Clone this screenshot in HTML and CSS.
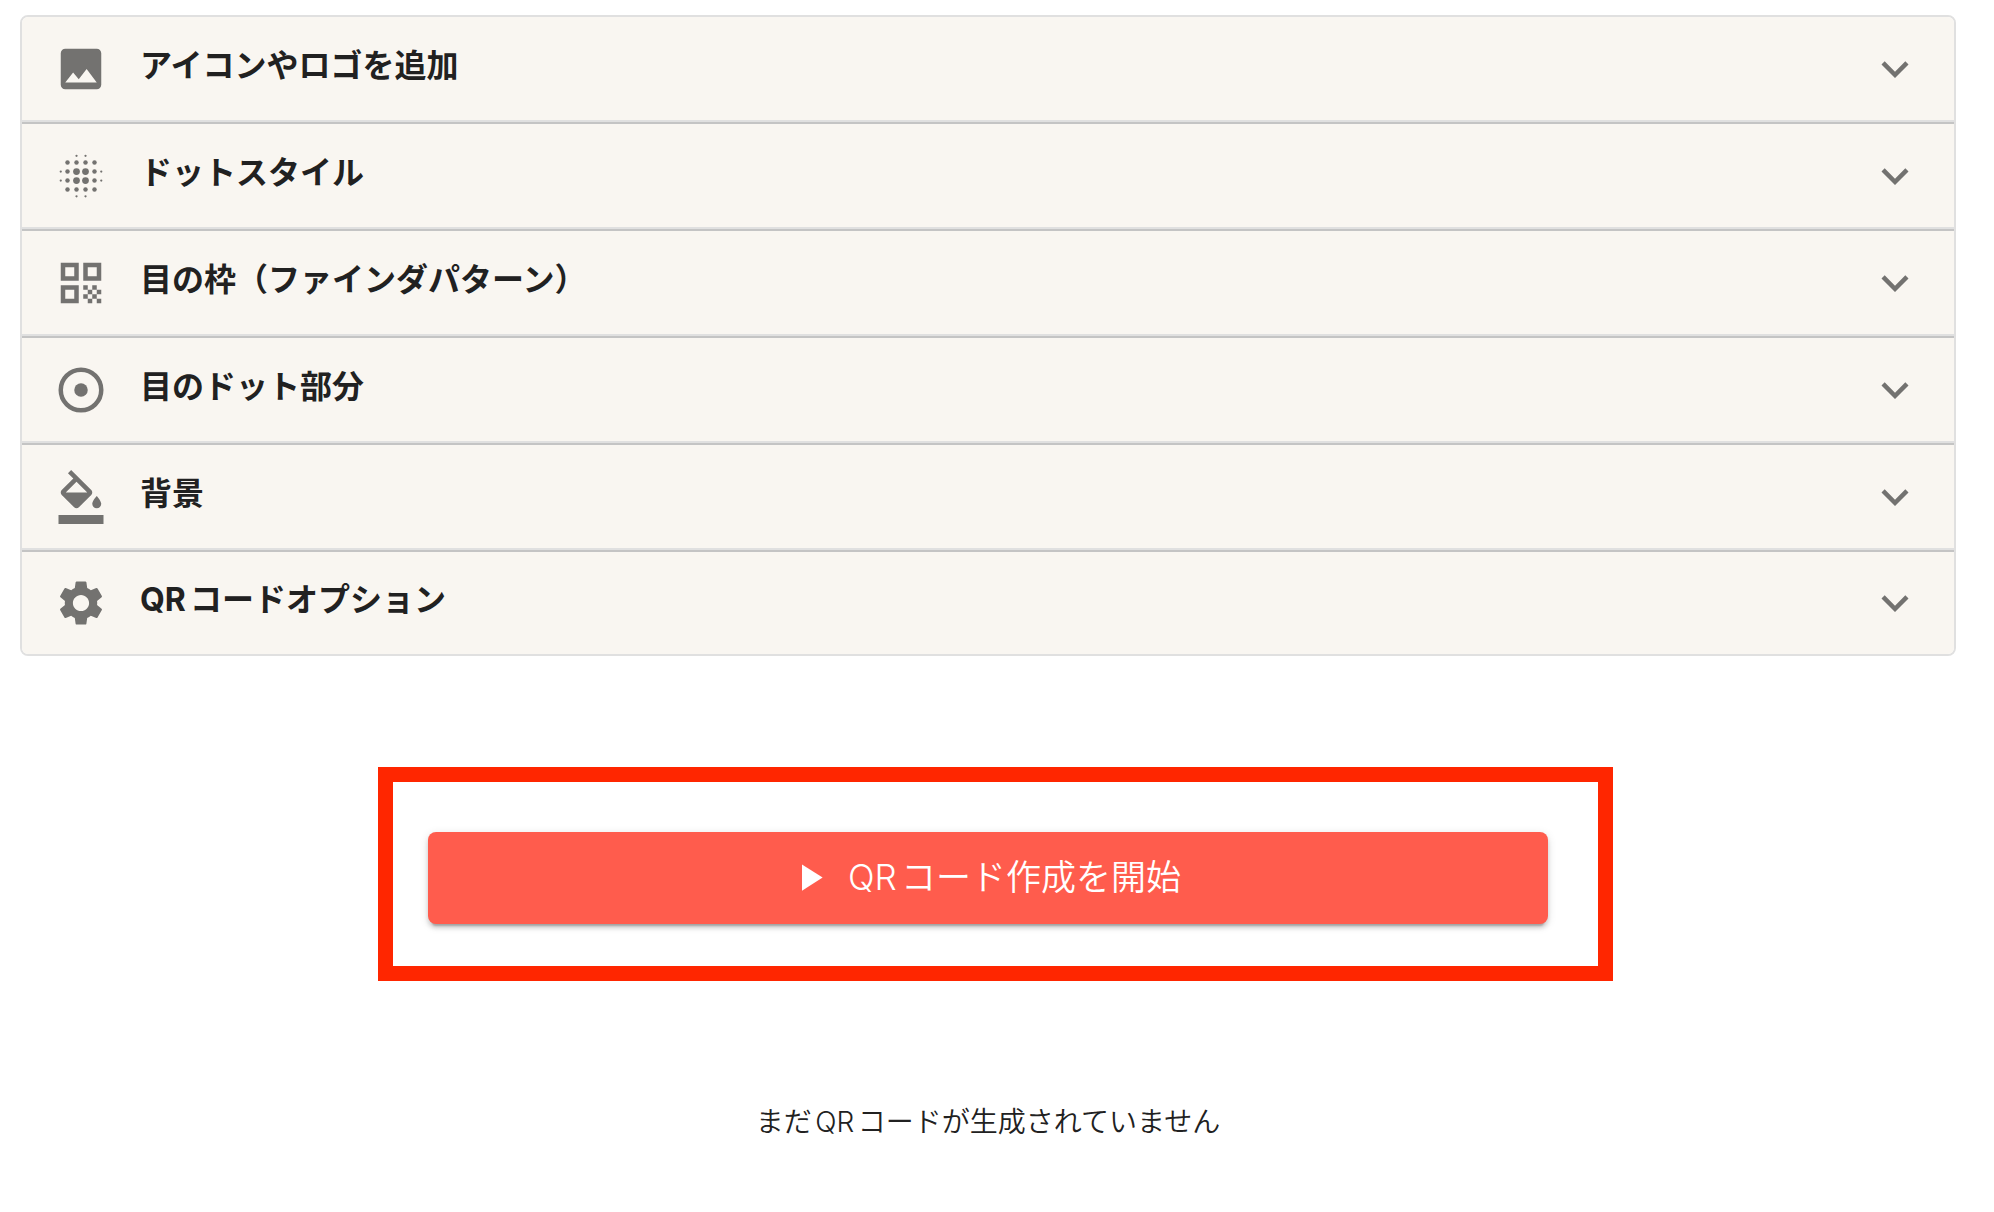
FILE: index.html
```html
<!DOCTYPE html>
<html lang="ja">
<head>
<meta charset="UTF-8" />
<meta name="viewport" content="width=device-width, initial-scale=1" />
<title>QRコード作成</title>
<link rel="stylesheet" href="styles.css">
</head>
<body>

<main>
  <div class="accordion">
    <button type="button" class="row" aria-expanded="false">
      <svg class="icon" viewBox="0 0 24 24"><path d="M21 19V5c0-1.100-.9-2-2-2H5c-1.100 0-2 .9-2 2v14c0 1.100.9 2 2 2h14c1.100 0 2-.9 2-2zM8.500 13.500l2.500 3.010L14.500 12l4.500 6H5l3.500-4.500z"/></svg>
      <span class="title">アイコンやロゴを追加</span>
      <svg class="icon" viewBox="0 0 24 24"><path d="M16.590 8.590L12 13.170 7.410 8.590 6 10l6 6 6-6z"/></svg>
    </button>
    <button type="button" class="row" aria-expanded="false">
      <svg class="icon" viewBox="0 0 24 24">
        <circle cx="10" cy="10" r="1.500"/><circle cx="14" cy="10" r="1.500"/><circle cx="10" cy="14" r="1.500"/><circle cx="14" cy="14" r="1.500"/>
        <circle cx="6" cy="6" r="1"/><circle cx="10" cy="6" r="1"/><circle cx="14" cy="6" r="1"/><circle cx="18" cy="6" r="1"/>
        <circle cx="6" cy="10" r="1"/><circle cx="18" cy="10" r="1"/><circle cx="6" cy="14" r="1"/><circle cx="18" cy="14" r="1"/>
        <circle cx="6" cy="18" r="1"/><circle cx="10" cy="18" r="1"/><circle cx="14" cy="18" r="1"/><circle cx="18" cy="18" r="1"/>
        <circle cx="10" cy="3" r=".5"/><circle cx="14" cy="3" r=".5"/><circle cx="10" cy="21" r=".5"/><circle cx="14" cy="21" r=".5"/>
        <circle cx="3" cy="10" r=".5"/><circle cx="3" cy="14" r=".5"/><circle cx="21" cy="10" r=".5"/><circle cx="21" cy="14" r=".5"/>
      </svg>
      <span class="title">ドットスタイル</span>
      <svg class="icon" viewBox="0 0 24 24"><path d="M16.590 8.590L12 13.170 7.410 8.590 6 10l6 6 6-6z"/></svg>
    </button>
    <button type="button" class="row" aria-expanded="false">
      <svg class="icon" viewBox="0 0 24 24"><path d="M3 11h8V3H3v8zm2-6h4v4H5V5zM3 21h8v-8H3v8zm2-6h4v4H5v-4zM13 3v8h8V3h-8zm6 6h-4V5h4v4zM19 19h2v2h-2zM13 13h2v2h-2zM15 15h2v2h-2zM13 17h2v2h-2zM15 19h2v2h-2zM17 17h2v2h-2zM17 13h2v2h-2zM19 15h2v2h-2z"/></svg>
      <span class="title">目の枠（ファインダパターン）</span>
      <svg class="icon" viewBox="0 0 24 24"><path d="M16.590 8.590L12 13.170 7.410 8.590 6 10l6 6 6-6z"/></svg>
    </button>
    <button type="button" class="row" aria-expanded="false">
      <svg class="icon" viewBox="0 0 24 24"><circle cx="12" cy="12" r="9" fill="none" stroke="currentColor" stroke-width="2"/><circle cx="12" cy="12" r="3"/></svg>
      <span class="title">目のドット部分</span>
      <svg class="icon" viewBox="0 0 24 24"><path d="M16.590 8.590L12 13.170 7.410 8.590 6 10l6 6 6-6z"/></svg>
    </button>
    <button type="button" class="row" aria-expanded="false">
      <svg class="icon" viewBox="0 0 24 24"><path d="M16.560 8.940L7.620 0 6.210 1.410l2.380 2.380-5.150 5.150c-.59.59-.59 1.540 0 2.120l5.500 5.500c.29.29.68.44 1.060.44s.77-.15 1.060-.44l5.500-5.500c.59-.58.59-1.530 0-2.120zM5.210 10L10 5.210 14.790 10H5.210zM19 11.500s-2 2.170-2 3.500c0 1.100.9 2 2 2s2-.9 2-2c0-1.330-2-3.500-2-3.500zM2 20h20v4H2z"/></svg>
      <span class="title">背景</span>
      <svg class="icon" viewBox="0 0 24 24"><path d="M16.590 8.590L12 13.170 7.410 8.590 6 10l6 6 6-6z"/></svg>
    </button>
    <button type="button" class="row" aria-expanded="false">
      <svg class="icon" viewBox="0 0 24 24"><path d="M19.140 12.940c.04-.3.060-.61.060-.94 0-.32-.02-.64-.07-.94l2.030-1.580c.18-.14.23-.41.120-.61l-1.920-3.320c-.12-.22-.37-.29-.59-.22l-2.390.96c-.5-.38-1.030-.7-1.620-.94l-.36-2.540c-.04-.24-.24-.41-.48-.41h-3.840c-.24 0-.43.17-.47.41l-.36 2.540c-.59.24-1.130.57-1.620.94l-2.390-.96c-.22-.08-.47 0-.59.22L2.740 8.870c-.12.21-.08.470.12.610l2.030 1.580c-.05.3-.09.630-.09.940s.02.640.07.940l-2.030 1.580c-.18.140-.23.410-.12.610l1.920 3.320c.12.220.37.290.59.220l2.390-.96c.5.380 1.030.7 1.620.940l.36 2.540c.05.240.24.410.48.410h3.840c.24 0 .44-.17.470-.41l.36-2.540c.59-.24 1.130-.56 1.620-.94l2.390.96c.22.080.470 0 .59-.22l1.920-3.320c.12-.22.070-.47-.12-.61l-2.010-1.580zM12 15.600c-1.980 0-3.600-1.620-3.600-3.600s1.620-3.600 3.600-3.600 3.600 1.620 3.600 3.600-1.620 3.600-3.600 3.600z"/></svg>
      <span class="title">QRコードオプション</span>
      <svg class="icon" viewBox="0 0 24 24"><path d="M16.590 8.590L12 13.170 7.410 8.590 6 10l6 6 6-6z"/></svg>
    </button>
  </div>

  <div class="generate">
    <button type="button" class="start">
      <svg viewBox="0 0 24 24"><path d="M8 5v14l11-7z"/></svg>
      <span>QRコード作成を開始</span>
    </button>
    <div class="highlight"></div>
  </div>

  <p class="empty">まだQRコードが生成されていません</p>
</main>

</body>
</html>
```
FILE: styles.css
```css
* {
  box-sizing: border-box;
}
body {
  margin: 0;
  background: #fff;
  color: #212121;
  font-family: Inter, "Noto Sans CJK JP", sans-serif;
  text-autospace: normal;
}
main {
  padding: 15px 38px 40px 20px;
}
button {
  font-family: inherit;
  cursor: pointer;
}
.accordion {
  border: 2px solid #e0e0e0;
  border-radius: 8px;
  overflow: hidden;
}
.row {
  display: flex;
  align-items: center;
  width: 100%;
  height: 107px;
  padding: 0 32px 2px;
  border: none;
  border-bottom: 2px solid #c4c4c4;
  box-shadow: inset 0 -2px #e0e0e0;
  background: #f9f6f1;
  color: #212121;
  text-align: left;
}
.row:last-child {
  height: 102px;
  padding-bottom: 0;
  border-bottom: none;
  box-shadow: none;
}
.icon {
  flex: none;
  width: 54px;
  height: 54px;
  fill: #737270;
  color: #737270;
}
.title {
  flex: 1;
  padding: 0 32px 6px;
  font-size: 32px;
  line-height: 48px;
  font-weight: 700;
}
.generate {
  position: relative;
  max-width: 1120px;
  margin: 176px auto 0;
}
.start {
  display: flex;
  align-items: center;
  justify-content: center;
  gap: 16px;
  width: 100%;
  height: 92px;
  padding: 0 40px 2px 32px;
  border: none;
  border-radius: 8px;
  background: #ff5c4d;
  color: #fff;
  font-size: 35px;
  font-weight: 350;
  box-shadow: 0 6px 2px -4px rgba(0, 0, 0, 0.2), 0 4px 4px rgba(0, 0, 0, 0.14), 0 2px 10px rgba(0, 0, 0, 0.12);
}
.start svg {
  width: 45px;
  height: 45px;
  fill: #fff;
}
.start span {
  padding-bottom: 6px;
}
/* frame drawn over the button area */
.highlight {
  position: absolute;
  inset: -65px -65px -57px -50px;
  border: 15px solid #ff2600;
  pointer-events: none;
}
.empty {
  margin: 178px 0 0;
  text-align: center;
  font-size: 28px;
  line-height: 40px;
  font-weight: 350;
}
```
